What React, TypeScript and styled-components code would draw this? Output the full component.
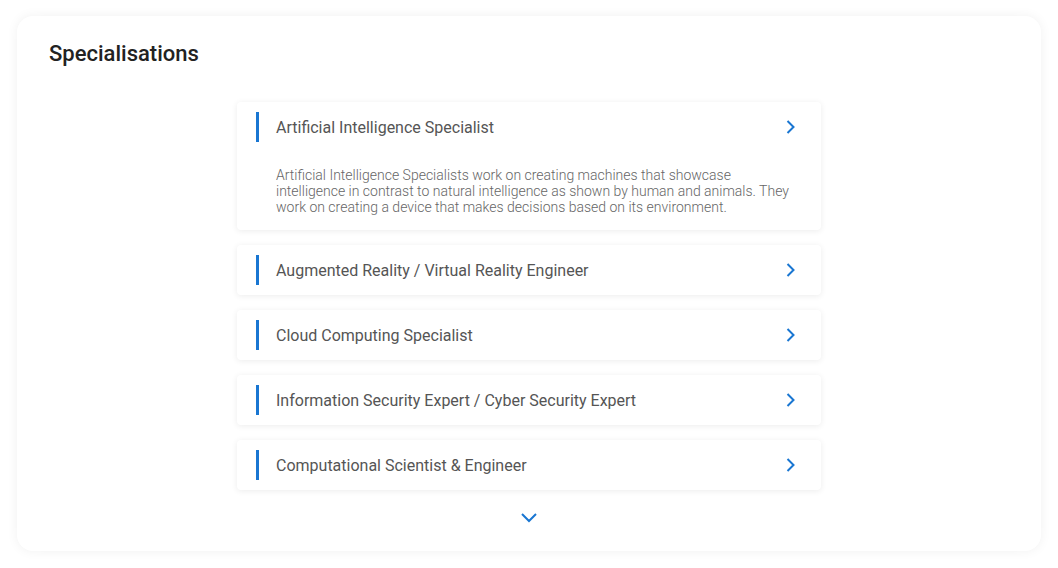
import React from "react";
import styled, { createGlobalStyle } from "styled-components";

const Global = createGlobalStyle`
  html, body { margin: 0; padding: 0; background: #fff; }
  body { font-family: Roboto, "Noto Sans", sans-serif; }
`;

const Page = styled.div`
  padding: 16px 17px 17px 17px;
  box-sizing: border-box;
  width: 1058px;
`;

const Card = styled.section`
  background: #fff;
  border-radius: 16px;
  box-shadow: 0 0 12px rgba(0, 0, 0, 0.06);
  padding: 24px 32px 24px 32px;
  height: 535px;
  box-sizing: border-box;
  display: flex;
  flex-direction: column;
`;

const Title = styled.h2`
  margin: 0;
  font-size: 22px;
  font-weight: 500;
  color: #222;
  line-height: 28px;
`;

const List = styled.div`
  width: 584px;
  margin: 34px auto 0 auto;
  display: flex;
  flex-direction: column;
  gap: 15px;
`;

const Item = styled.div`
  background: #fff;
  border-radius: 4px;
  box-shadow: 0 1px 6px rgba(0, 0, 0, 0.08);
  padding: 10px 19px;
`;

const Header = styled.div`
  display: flex;
  align-items: center;
  height: 30px;
  border-left: 3px solid #1976d2;
  padding-left: 17px;
`;

const Label = styled.div`
  flex: 1;
  font-size: 16px;
  color: #555;
`;

const Desc = styled.p`
  margin: 25px 0 5px 20px;
  padding-right: 10px;
  font-size: 14px;
  font-weight: 300;
  line-height: 16px;
  color: #666;
`;

const More = styled.div`
  display: flex;
  justify-content: center;
  margin-top: 22px;
`;

const Chevron = ({ dir }: { dir: "right" | "down" }) =>
  dir === "right" ? (
    <svg width="16" height="16" viewBox="0 0 16 16" style={{ marginRight: 4 }}>
      <path d="M5.5 2 L11.5 8 L5.5 14" fill="none" stroke="#1976d2" strokeWidth="2" />
    </svg>
  ) : (
    <svg width="18" height="12" viewBox="0 0 18 12">
      <path d="M2 2 L9 9 L16 2" fill="none" stroke="#1976d2" strokeWidth="2" />
    </svg>
  );

const items = [
  "Artificial Intelligence Specialist",
  "Augmented Reality / Virtual Reality Engineer",
  "Cloud Computing Specialist",
  "Information Security Expert / Cyber Security Expert",
  "Computational Scientist & Engineer",
];

export default function App() {
  return (
    <>
      <Global />
      <Page>
        <Card>
          <Title>Specialisations</Title>
          <List>
            {items.map((t, i) => (
              <Item key={t}>
                <Header>
                  <Label>{t}</Label>
                  <Chevron dir="right" />
                </Header>
                {i === 0 && (
                  <Desc>
                    Artificial Intelligence Specialists work on creating machines that showcase
                    intelligence in contrast to natural intelligence as shown by human and animals.
                    They work on creating a device that makes decisions based on its environment.
                  </Desc>
                )}
              </Item>
            ))}
          </List>
          <More>
            <Chevron dir="down" />
          </More>
        </Card>
      </Page>
    </>
  );
}
